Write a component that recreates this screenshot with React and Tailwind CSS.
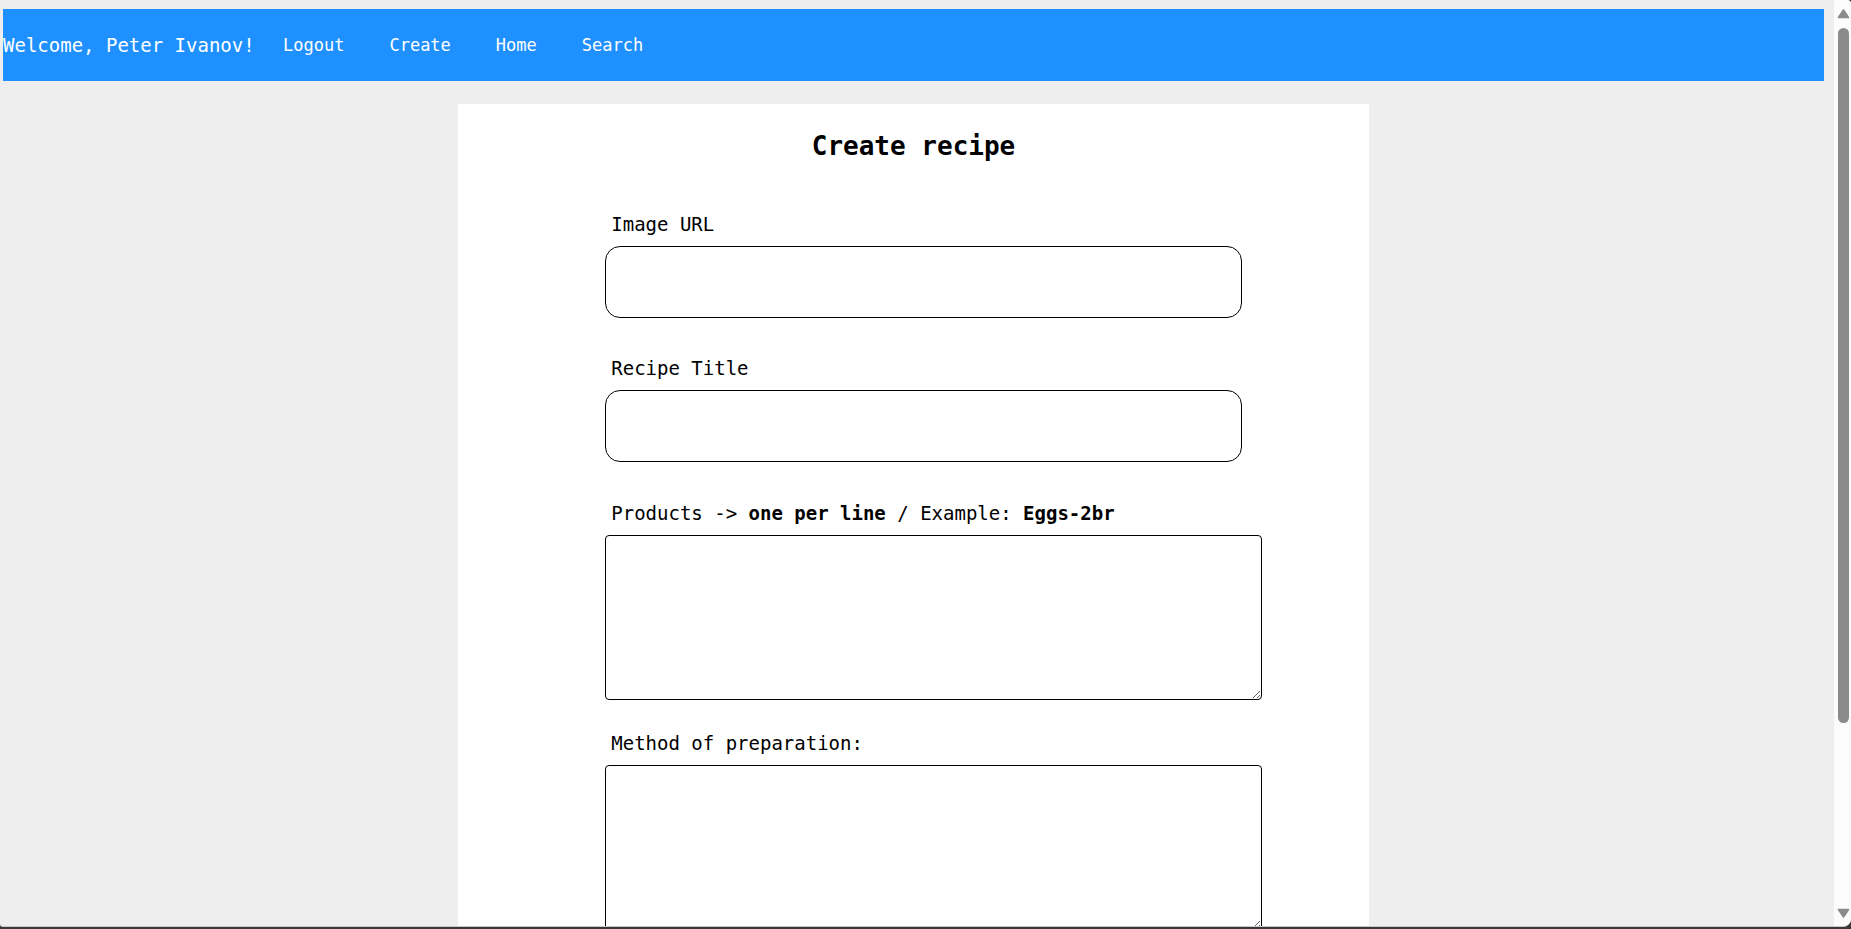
import React from "react";

const links = ["Logout", "Create", "Home", "Search"];

function Field({ id, label, children }) {
  return (
    <div className="flex flex-col gap-[10px]">
      <label htmlFor={id} className="pl-[6px] text-[19px] leading-6">
        {label}
      </label>
      {children}
    </div>
  );
}

function ScrollBar() {
  return (
    <div aria-hidden="true" className="flex w-[17px] shrink-0 flex-col items-center bg-[#fcfcfc] pt-[9px] pb-[8px] pl-[2px]">
      <svg width="13" height="10" viewBox="0 0 13 10">
        <path d="M6.5 1 11.5 8.5h-10Z" fill="#8b8b8b" stroke="#8b8b8b" strokeWidth="1.6" strokeLinejoin="round" />
      </svg>
      <div className="flex min-h-0 w-full grow flex-col items-center pt-[9px]">
        <div className="h-[79%] w-[11px] rounded-full bg-[#8b8b8b]" />
      </div>
      <svg width="13" height="10" viewBox="0 0 13 10">
        <path d="M6.5 9 1.5 1.5h10Z" fill="#8b8b8b" stroke="#8b8b8b" strokeWidth="1.6" strokeLinejoin="round" />
      </svg>
    </div>
  );
}

export default function App() {
  return (
    <div className="h-screen bg-[#38383a] pb-[2px] font-['DejaVu_Sans_Mono',monospace] text-black">
      <div className="flex h-full overflow-hidden rounded-tr-[4px] rounded-br-lg rounded-bl-[3px] border-b border-[#c8c8c8] bg-[#eeeeee]">
        <div className="min-w-0 flex-1 overflow-hidden pt-[9px] pr-[10px] pl-[3px]">
          <nav className="flex h-[72px] items-center bg-[#1e90ff] text-white">
            <span className="w-[280px] shrink-0 text-[19px] leading-6">Welcome, Peter Ivanov!</span>
            <ul className="flex gap-[45px] text-[17px] leading-6">
              {links.map((name) => (
                <li key={name}>
                  <a href="#">{name}</a>
                </li>
              ))}
            </ul>
          </nav>

          <main className="mx-auto mt-[23px] w-1/2 bg-white pt-[26px] pb-12">
            <h1 className="text-center text-[26px] leading-8 font-bold">Create recipe</h1>
            <form className="mt-[50px] flex flex-col pl-[147px]">
              <div className="flex flex-col gap-[38px]">
                <Field id="image" label="Image URL">
                  <input id="image" type="text" className="h-[72px] w-5/6 rounded-[15px] border border-black px-4" />
                </Field>
                <Field id="title" label="Recipe Title">
                  <input id="title" type="text" className="h-[72px] w-5/6 rounded-[15px] border border-black px-4" />
                </Field>
              </div>
              <div className="mt-[39px] flex flex-col gap-[31px]">
                <Field
                  id="products"
                  label={
                    <>
                      Products -&gt; <b>one per line</b> / Example: <b>Eggs-2br</b>
                    </>
                  }
                >
                  <textarea id="products" className="h-[165px] w-[86%] resize rounded-[4px] border border-black p-2" />
                </Field>
                <Field id="method" label="Method of preparation:">
                  <textarea id="method" className="h-[165px] w-[86%] resize rounded-[4px] border border-black p-2" />
                </Field>
              </div>
            </form>
          </main>
        </div>
        <ScrollBar />
      </div>
    </div>
  );
}
